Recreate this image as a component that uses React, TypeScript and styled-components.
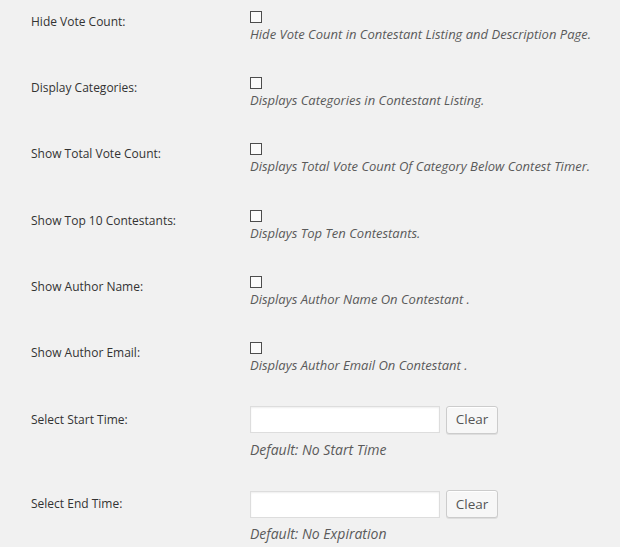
import { createGlobalStyle, styled } from 'styled-components';

const GlobalStyle = createGlobalStyle`
  html, body {
    margin: 0;
    padding: 0;
    background: #f1f1f1;
  }
  body {
    font-family: 'Open Sans', 'Liberation Sans', sans-serif;
    color: #333;
  }
`;

const Page = styled.div`
  width: 620px;
  height: 547px;
  overflow: hidden;
  background: #f1f1f1;
  padding-left: 31px;
  box-sizing: border-box;
`;

const Row = styled.div<{ $kind: 'check' | 'time' }>`
  display: flex;
  align-items: flex-start;
  padding: ${(p) => (p.$kind === 'check' ? '10.5px 0 22.9px' : '7.5px 0 23px')};
`;

const Label = styled.div<{ $lh: number }>`
  width: 219px;
  flex-shrink: 0;
  padding-top: ${(p) => (p.$lh === 20 ? 1 : 0)}px;
  font-size: 12px;
  line-height: ${(p) => p.$lh}px;
  color: #333;
`;

const Field = styled.div`
  display: flex;
  flex-direction: column;
  align-items: flex-start;
`;

const Checkbox = styled.input.attrs({ type: 'checkbox' })`
  appearance: none;
  -webkit-appearance: none;
  margin: 0;
  width: 12px;
  height: 12px;
  box-sizing: border-box;
  border: 1px solid #4d4d4d;
  background: #fbfbfb;
  border-radius: 0;
  display: block;
`;

const Description = styled.p<{ $gap: number; $size: number }>`
  margin: ${(p) => p.$gap}px 0 0;
  font-size: ${(p) => p.$size}px;
  line-height: 20px;
  font-style: italic;
  color: #5a5a5a;
`;

const InputLine = styled.div`
  display: flex;
  align-items: center;
  gap: 6px;
`;

const TextInput = styled.input.attrs({ type: 'text' })`
  width: 190px;
  height: 27px;
  box-sizing: border-box;
  margin: 0;
  border: 1px solid #ddd;
  background: #fff;
  box-shadow: inset 0 1px 2px rgba(0, 0, 0, 0.07);
  font-family: inherit;
  font-size: 13px;
  padding: 3px 5px;
  outline: none;
`;

const ClearButton = styled.button`
  height: 28px;
  width: 52px;
  box-sizing: border-box;
  margin: 0;
  padding: 0 8px 1px;
  border: 1px solid #ccc;
  border-radius: 3px;
  background: #f7f7f7;
  box-shadow: inset 0 1px 0 #fff, 0 1px 0 rgba(0, 0, 0, 0.08);
  font-family: inherit;
  font-size: 13.5px;
  color: #555;
  cursor: pointer;
`;

const checkRows = [
  ['Hide Vote Count:', 'Hide Vote Count in Contestant Listing and Description Page.'],
  ['Display Categories:', 'Displays Categories in Contestant Listing.'],
  ['Show Total Vote Count:', 'Displays Total Vote Count Of Category Below Contest Timer.'],
  ['Show Top 10 Contestants:', 'Displays Top Ten Contestants.'],
  ['Show Author Name:', 'Displays Author Name On Contestant .'],
  ['Show Author Email:', 'Displays Author Email On Contestant .'],
];

const timeRows = [
  ['Select Start Time:', 'Default: No Start Time'],
  ['Select End Time:', 'Default: No Expiration'],
];

export default function App() {
  return (
    <>
      <GlobalStyle />
      <Page>
        {checkRows.map(([label, desc]) => (
          <Row $kind="check" key={label}>
            <Label $lh={20}>{label}</Label>
            <Field>
              <Checkbox />
              <Description $gap={1} $size={13}>{desc}</Description>
            </Field>
          </Row>
        ))}
        {timeRows.map(([label, desc]) => (
          <Row $kind="time" key={label}>
            <Label $lh={27}>{label}</Label>
            <Field>
              <InputLine>
                <TextInput />
                <ClearButton>Clear</ClearButton>
              </InputLine>
              <Description $gap={6} $size={14}>{desc}</Description>
            </Field>
          </Row>
        ))}
      </Page>
    </>
  );
}
